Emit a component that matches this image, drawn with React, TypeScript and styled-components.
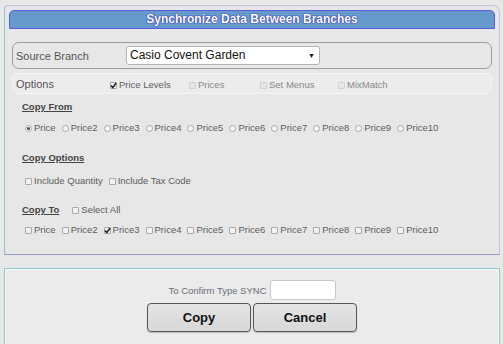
import React from 'react'
import styled, { createGlobalStyle } from 'styled-components'

const GlobalStyle = createGlobalStyle`
  html, body {
    margin: 0;
    padding: 0;
    background: #e8e8e8;
    font-family: "Liberation Sans", Arial, sans-serif;
  }
`

const prices = ['Price', 'Price2', 'Price3', 'Price4', 'Price5', 'Price6', 'Price7', 'Price8', 'Price9', 'Price10']

const CheckMark = () => (
  <svg width="7" height="7" viewBox="0 0 7 7">
    <path d="M1 3.6 L2.8 5.5 L6.2 1" fill="none" stroke="#222" strokeWidth="1.5" />
  </svg>
)

const Check = ({ checked, disabled, label }: { checked?: boolean; disabled?: boolean; label: string }) => (
  <Choice $disabled={disabled}>
    <Box $disabled={disabled}>{checked && <CheckMark />}</Box>
    {label}
  </Choice>
)

const Radio = ({ checked, label }: { checked?: boolean; label: string }) => (
  <Choice>
    <Round>{checked && <Dot />}</Round>
    {label}
  </Choice>
)

export default function App() {
  return (
    <Page>
      <GlobalStyle />
      <Panel>
        <Header>Synchronize Data Between Branches</Header>
        <SourceRow>
          <RowLabel $width={110}>Source Branch</RowLabel>
          <Select>
            Casio Covent Garden
            <Arrow>▼</Arrow>
          </Select>
        </SourceRow>
        <OptionsRow>
          <RowLabel $width={94}>Options</RowLabel>
          <OptionCell $width={79}>
            <Check checked label="Price Levels" />
          </OptionCell>
          <OptionCell $width={71}>
            <Check disabled label="Prices" />
          </OptionCell>
          <OptionCell $width={78}>
            <Check disabled label="Set Menus" />
          </OptionCell>
          <OptionCell $width={80}>
            <Check disabled label="MixMatch" />
          </OptionCell>
        </OptionsRow>

        <Group $top={7}>
          <Heading>Copy From</Heading>
          <ChoiceRow $gap={8}>
            {prices.map((p, i) => (
              <Radio key={p} label={p} checked={i === 0} />
            ))}
          </ChoiceRow>
        </Group>

        <Group $top={17}>
          <Heading>Copy Options</Heading>
          <ChoiceRow $gap={10}>
            <Check label="Include Quantity" />
            <Check label="Include Tax Code" />
          </ChoiceRow>
        </Group>

        <Group $top={15}>
          <HeadingLine>
            <Heading>Copy To</Heading>
            <Check label="Select All" />
          </HeadingLine>
          <ChoiceRow $gap={6}>
            {prices.map((p, i) => (
              <Check key={p} label={p} checked={i === 2} />
            ))}
          </ChoiceRow>
        </Group>
      </Panel>

      <ConfirmPanel>
        <ConfirmLine>
          To Confirm Type SYNC
          <ConfirmInput />
        </ConfirmLine>
        <Buttons>
          <Button>Copy</Button>
          <Button>Cancel</Button>
        </Buttons>
      </ConfirmPanel>
    </Page>
  )
}

const Page = styled.div`
  width: 503px;
  height: 344px;
  box-sizing: border-box;
  padding: 5px 3px 0 4px;
  overflow: hidden;
`

const Panel = styled.div`
  border: 1px solid #bcc4e2;
  border-left-color: #8cc8c8;
  border-bottom-color: #9a9acc;
  border-radius: 4px 7px 0 0;
  background: #e7e7e7;
  padding: 4px 4px 17px 4px;
`

const Header = styled.div`
  height: 17px;
  line-height: 17px;
  border: 1px solid #5a5adc;
  border-radius: 5px 5px 0 0;
  background: #6699cc;
  color: #fff;
  font-size: 12px;
  font-weight: bold;
  text-align: center;
  text-shadow: 0 0 1px #3030b0, 0 0 1px #3030b0, 0 0 1px #3030b0;
`

const SourceRow = styled.div`
  display: flex;
  align-items: center;
  height: 25px;
  margin: 13px 3px 0 3px;
  padding-left: 3px;
  border: 1px solid #9a9a9a;
  border-radius: 7px;
`

const RowLabel = styled.div<{ $width: number }>`
  width: ${(p) => p.$width}px;
  flex: none;
  font-size: 11px;
  color: #555;
`

const Select = styled.div`
  position: relative;
  width: 194px;
  height: 19px;
  box-sizing: border-box;
  border: 1px solid #b4b4b4;
  border-radius: 3px;
  background: #fff;
  padding-left: 3px;
  font-size: 12px;
  line-height: 17px;
  color: #111;
`

const Arrow = styled.span`
  position: absolute;
  right: 4px;
  top: 0;
  font-size: 7px;
  color: #111;
`

const OptionsRow = styled.div`
  display: flex;
  align-items: center;
  height: 19px;
  margin: 4px 3px 0 3px;
  padding-left: 3px;
  border: 1px solid #f6f6f6;
  border-radius: 6px;
  background: #ececec;
`

const OptionCell = styled.div<{ $width: number }>`
  width: ${(p) => p.$width}px;
  flex: none;
`

const Group = styled.div<{ $top: number }>`
  margin-top: ${(p) => p.$top}px;
  padding-left: 13px;
`

const Heading = styled.div`
  font-size: 9.5px;
  line-height: 12px;
  font-weight: bold;
  color: #444;
  text-decoration: underline;
`

const HeadingLine = styled.div`
  display: flex;
  align-items: center;
  gap: 13px;
`

const ChoiceRow = styled.div<{ $gap: number }>`
  display: flex;
  align-items: center;
  margin-top: ${(p) => p.$gap}px;
  padding-left: 3px;
  gap: 6px;
  height: 14px;
`

const Choice = styled.span<{ $disabled?: boolean }>`
  display: inline-flex;
  align-items: center;
  font-size: 9.5px;
  line-height: 14px;
  color: ${(p) => (p.$disabled ? '#888' : '#5c5c5c')};
  white-space: nowrap;
`

const Box = styled.span<{ $disabled?: boolean }>`
  display: inline-flex;
  align-items: center;
  justify-content: center;
  width: 5px;
  height: 5px;
  margin-right: 2px;
  border: 1px solid ${(p) => (p.$disabled ? '#d0d0d0' : '#a8a8a8')};
  border-radius: 1px;
  background: ${(p) => (p.$disabled ? '#e6e6e6' : '#f2f2f2')};
  box-sizing: content-box;
  overflow: visible;
  & svg {
    width: 7px;
    height: 7px;
    flex: none;
  }
`

const Round = styled.span`
  display: inline-flex;
  align-items: center;
  justify-content: center;
  width: 5px;
  height: 5px;
  margin-right: 2px;
  border: 1px solid #aaa;
  border-radius: 50%;
  background: #f4f4f4;
`

const Dot = styled.span`
  width: 3px;
  height: 3px;
  border-radius: 50%;
  background: #444;
`

const ConfirmPanel = styled.div`
  margin-top: 13px;
  height: 73px;
  border: 1px solid #8ccaca;
  box-shadow: inset 0 0 0 1px #f8f8f8;
  background: #ebebeb;
  padding-top: 11px;
  box-sizing: content-box;
  display: flex;
  flex-direction: column;
  align-items: center;
`

const ConfirmLine = styled.div`
  display: flex;
  align-items: center;
  gap: 3px;
  font-size: 9.5px;
  color: #6a6e78;
`

const ConfirmInput = styled.div`
  width: 66px;
  height: 20px;
  box-sizing: border-box;
  border: 1px solid #c8c8c8;
  border-radius: 3px;
  background: #fff;
`

const Buttons = styled.div`
  display: flex;
  gap: 2px;
  margin-top: 3px;
`

const Button = styled.button`
  width: 104px;
  height: 29px;
  border: 1px solid #555;
  border-radius: 4px;
  background: linear-gradient(#e4e4e4, #d8d8d8);
  box-shadow: 0 1px 1px rgba(0, 0, 0, 0.2);
  font-family: "Liberation Sans", Arial, sans-serif;
  font-size: 13px;
  font-weight: bold;
  color: #111;
  padding: 0;
`
